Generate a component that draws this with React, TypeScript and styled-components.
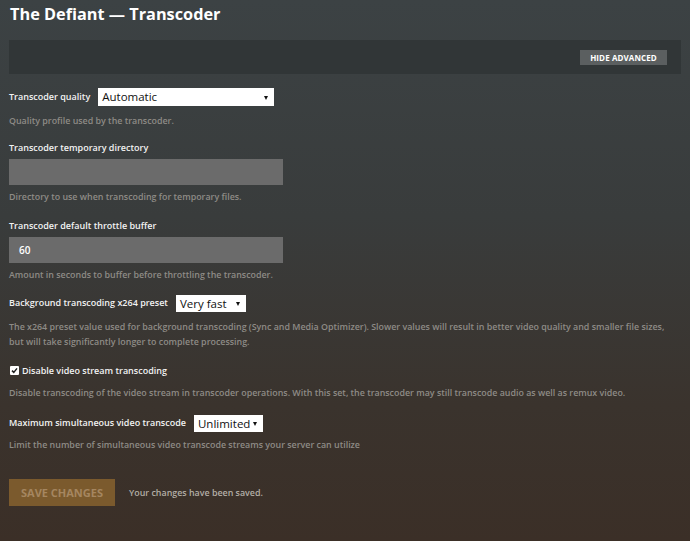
import styled, { createGlobalStyle } from 'styled-components';

const GlobalStyle = createGlobalStyle`
	html, body {
		margin: 0;
		padding: 0;
	}
	body {
		font-family: 'Open Sans', 'Noto Sans', sans-serif;
		background: #3a3a38;
	}
`;

const Page = styled.div`
	min-height: 541px;
	box-sizing: border-box;
	padding: 4px 9px 20px 9px;
	background: linear-gradient(to bottom, #3c4244 0%, #393c3c 40%, #3a332d 75%, #3b2f27 100%);
	color: #eee;
`;

const Title = styled.h1`
	margin: 0 0 0 1px;
	font-size: 16.3px;
	line-height: 20px;
	font-weight: 700;
	color: #fff;
`;

const AdvancedBar = styled.div`
	margin-top: 16px;
	height: 34px;
	width: 672px;
	display: flex;
	align-items: center;
	justify-content: flex-end;
	padding-right: 14px;
	box-sizing: border-box;
	background: #313637;
`;

const SmallButton = styled.button`
	height: 15px;
	width: 87px;
	padding: 0;
	border: 0;
	background: #5b5f60;
	color: #fff;
	font-family: inherit;
	font-size: 8px;
	font-weight: 700;
	text-transform: uppercase;
	letter-spacing: 0.1px;
`;

const Form = styled.div`
	display: flex;
	flex-direction: column;
	margin-top: 14px;
`;

const Group = styled.div<{ $gap?: number }>`
	display: flex;
	flex-direction: column;
	align-items: flex-start;
	margin-top: ${(p) => p.$gap ?? 0}px;
`;

const InlineRow = styled.div`
	display: flex;
	align-items: center;
	gap: 8px;
	height: 18px;
`;

const Label = styled.label`
	font-size: 9px;
	line-height: 14px;
	font-weight: 600;
	color: #f2f2f2;
	white-space: nowrap;
`;

const Select = styled.div<{ $width: number; $height?: number }>`
	position: relative;
	box-sizing: border-box;
	width: ${(p) => p.$width}px;
	height: ${(p) => p.$height ?? 18}px;
	background: #fff;
	color: #111;
	font-family: 'Open Sans', sans-serif;
	font-size: 11.5px;
	line-height: ${(p) => p.$height ?? 18}px;
	padding-left: 4px;

	&::after {
		content: '';
		position: absolute;
		right: 6px;
		top: 50%;
		margin-top: -1px;
		border-left: 2.5px solid transparent;
		border-right: 2.5px solid transparent;
		border-top: 4px solid #111;
	}
`;

const TextInput = styled.div`
	box-sizing: border-box;
	margin-top: 4px;
	width: 274px;
	height: 26px;
	background: #6b6b6b;
	color: #fff;
	font-size: 10px;
	font-weight: 600;
	line-height: 26px;
	padding-left: 10px;
`;

const Help = styled.p<{ $gap?: number }>`
	margin: ${(p) => p.$gap ?? 4}px 0 0 0;
	font-size: 8.9px;
	line-height: 15px;
	font-weight: 600;
	color: #8e8b86;
	white-space: nowrap;
`;

const CheckRow = styled.label`
	display: flex;
	align-items: center;
	gap: 3px;
	height: 14px;
	font-size: 9px;
	font-weight: 600;
	color: #f2f2f2;
	padding-left: 1px;
`;

const CheckBox = styled.span`
	display: inline-flex;
	align-items: center;
	justify-content: center;
	width: 9px;
	height: 9px;
	background: #fff;
	border-radius: 1px;
`;

const Footer = styled.div`
	display: flex;
	align-items: center;
	gap: 14px;
	margin-top: 27px;
`;

const SaveButton = styled.button`
	width: 106px;
	height: 27px;
	padding: 0;
	border: 0;
	background: #7b5a2d;
	color: #a58660;
	font-family: inherit;
	font-size: 11px;
	font-weight: 700;
	text-transform: uppercase;
`;

const Status = styled.span`
	font-size: 8.9px;
	font-weight: 600;
	color: #b3aea6;
`;

export default function App() {
	return (
		<Page>
			<GlobalStyle />
			<Title>The Defiant — Transcoder</Title>
			<AdvancedBar>
				<SmallButton>Hide Advanced</SmallButton>
			</AdvancedBar>
			<Form>
				<Group>
					<InlineRow>
						<Label>Transcoder quality</Label>
						<Select $width={176}>Automatic</Select>
					</InlineRow>
					<Help $gap={7}>Quality profile used by the transcoder.</Help>
				</Group>
				<Group $gap={13}>
					<Label>Transcoder temporary directory</Label>
					<TextInput />
					<Help>Directory to use when transcoding for temporary files.</Help>
				</Group>
				<Group $gap={15}>
					<Label>Transcoder default throttle buffer</Label>
					<TextInput>60</TextInput>
					<Help>Amount in seconds to buffer before throttling the transcoder.</Help>
				</Group>
				<Group $gap={12}>
					<InlineRow>
						<Label>Background transcoding x264 preset</Label>
						<Select $width={70} $height={17}>Very fast</Select>
					</InlineRow>
					<Help $gap={7}>
						The x264 preset value used for background transcoding (Sync and Media Optimizer). Slower values will result in better video quality and smaller file sizes,
						<br />
						but will take significantly longer to complete processing.
					</Help>
				</Group>
				<Group $gap={14}>
					<CheckRow>
						<CheckBox>
							<svg width="7" height="7" viewBox="0 0 7 7">
								<path d="M1 3.6 L2.8 5.4 L6 1.4" stroke="#222" strokeWidth="1.5" fill="none" />
							</svg>
						</CheckBox>
						Disable video stream transcoding
					</CheckRow>
					<Help $gap={8}>
						Disable transcoding of the video stream in transcoder operations. With this set, the transcoder may still transcode audio as well as remux video.
					</Help>
				</Group>
				<Group $gap={14}>
					<InlineRow>
						<Label>Maximum simultaneous video transcode</Label>
						<Select $width={69} $height={17}>Unlimited</Select>
					</InlineRow>
					<Help $gap={5}>Limit the number of simultaneous video transcode streams your server can utilize</Help>
				</Group>
			</Form>
			<Footer>
				<SaveButton>Save Changes</SaveButton>
				<Status>Your changes have been saved.</Status>
			</Footer>
		</Page>
	);
}
